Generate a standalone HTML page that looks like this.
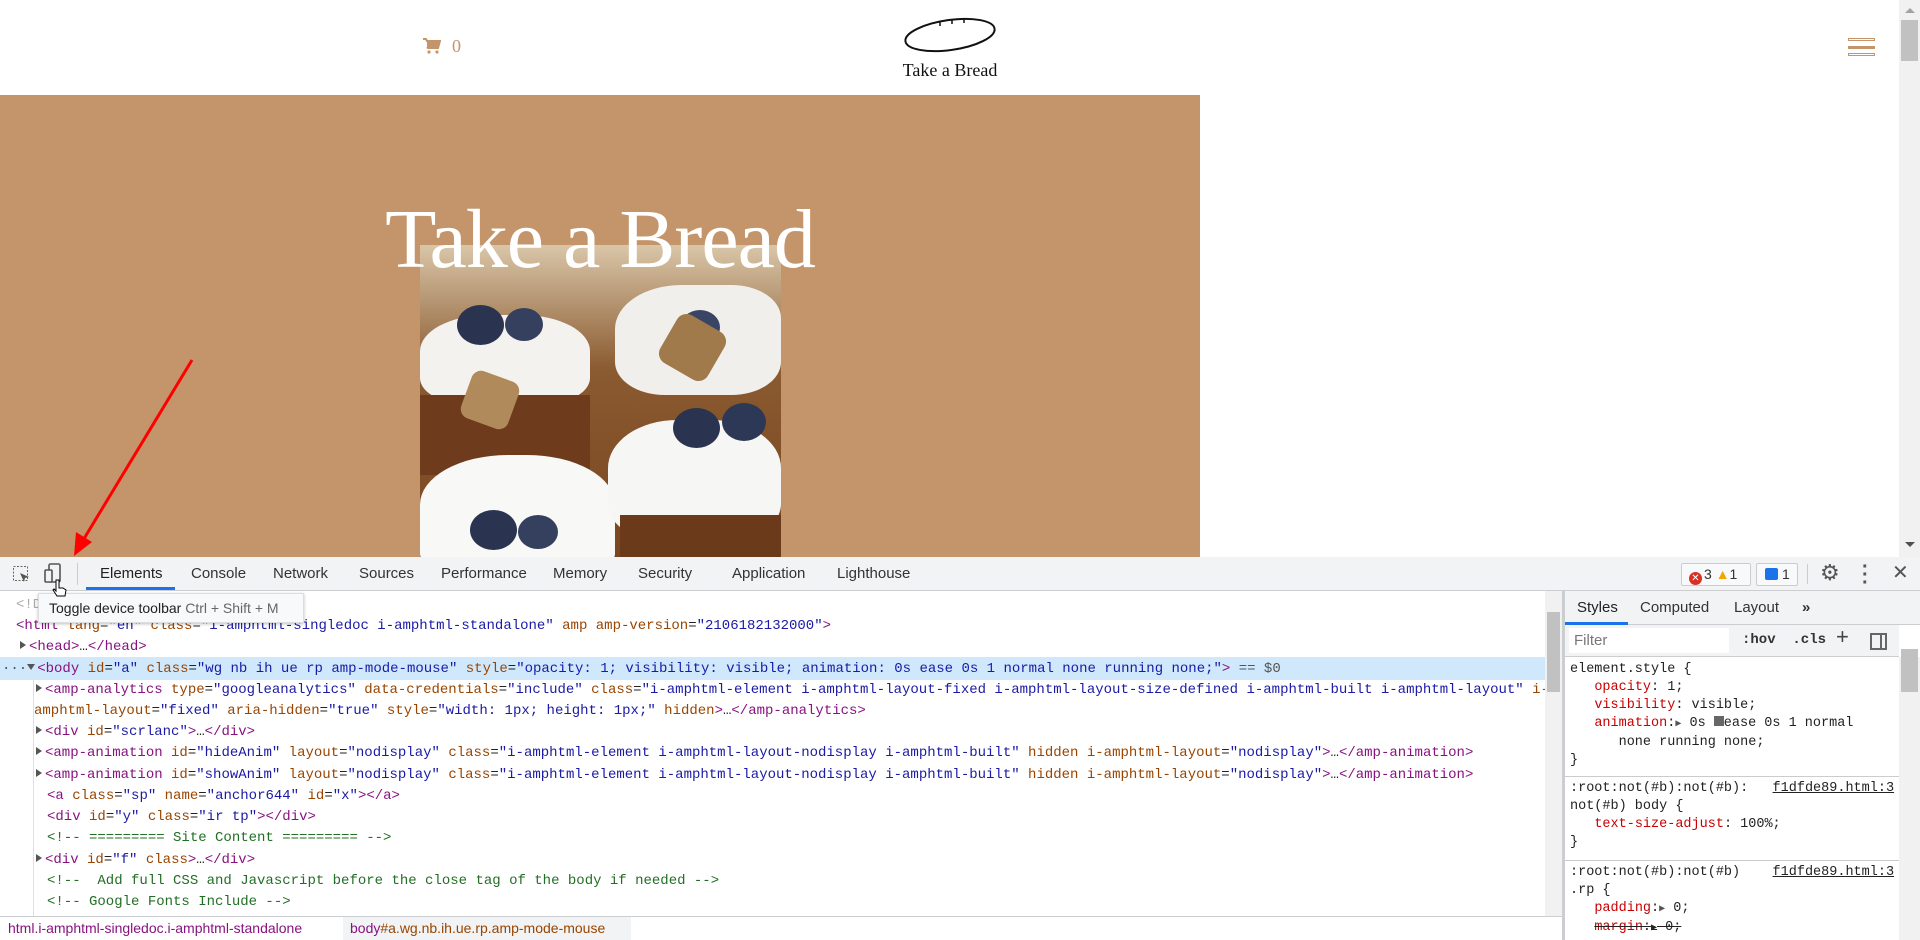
<!DOCTYPE html>
<html><head><meta charset="utf-8">
<style>
*{margin:0;padding:0;box-sizing:border-box}
body{width:1920px;height:940px;overflow:hidden;background:#fff;position:relative;font-family:"Liberation Sans",sans-serif}
.abs{position:absolute}
.code{font-family:"Liberation Mono",monospace;font-size:14px;white-space:pre;color:#222}
.t{color:#881280}.n{color:#994500}.v{color:#1a1aa6}.c{color:#236e25}.g{color:#555}
.tri{display:inline-block;width:0;height:0;border-left:6px solid #555;border-top:4px solid transparent;border-bottom:4px solid transparent;margin-right:3px;vertical-align:1px}
.trid{display:inline-block;width:0;height:0;border-top:6px solid #555;border-left:4px solid transparent;border-right:4px solid transparent;margin-right:2px;vertical-align:2px}
.line{position:absolute;left:0;height:21px;line-height:21px}
.tab{position:absolute;top:557px;height:34px;line-height:34px;font-size:15px;color:#333}
.st{font-family:"Liberation Mono",monospace;font-size:13.5px;white-space:pre;line-height:18px;position:absolute;left:1570px;color:#222}
.r{color:#c80000}
</style></head><body>
<svg class="abs" style="left:423px;top:38px" width="18" height="16" viewBox="0 0 18 16"><path d="M0 1h3l1 2h13l-2 7H5l-1-1" fill="none" stroke="#c4956a" stroke-width="2"/><rect x="4" y="3" width="12" height="6" fill="#c4956a"/><circle cx="6" cy="14" r="1.6" fill="#c4956a"/><circle cx="14" cy="14" r="1.6" fill="#c4956a"/></svg>
<div class="abs" style="left:452px;top:36px;font-family:'Liberation Serif',serif;font-size:18px;color:#c4956a">0</div>
<svg class="abs" style="left:900px;top:14px" width="100" height="42" viewBox="0 0 100 42"><ellipse cx="50" cy="21" rx="45" ry="15" transform="rotate(-8 50 21)" fill="none" stroke="#111" stroke-width="2"/><path d="M40 8v4M52 6v4M64 5v4" stroke="#111" stroke-width="1.5"/></svg>
<div class="abs" style="left:880px;top:60px;width:140px;text-align:center;font-family:'Liberation Serif',serif;font-size:18px;color:#111">Take a Bread</div>
<div class="abs" style="left:1848px;top:38px;width:27px;height:3px;border:1px solid #c4956a"></div>
<div class="abs" style="left:1848px;top:46px;width:27px;height:3px;background:#c4956a"></div>
<div class="abs" style="left:1848px;top:53px;width:27px;height:3px;border:1px solid #c4956a"></div>
<div class="abs" style="left:1899px;top:0;width:21px;height:557px;background:#f1f1f1"></div>
<div class="abs" style="left:1905px;top:8px;width:0;height:0;border-left:5px solid transparent;border-right:5px solid transparent;border-bottom:5px solid #a3a3a3"></div>
<div class="abs" style="left:1901px;top:20px;width:17px;height:41px;background:#c1c1c1"></div>
<div class="abs" style="left:1905px;top:542px;width:0;height:0;border-left:5px solid transparent;border-right:5px solid transparent;border-top:5px solid #505050"></div>
<div class="abs" style="left:0;top:95px;width:1200px;height:462px;background:#c4956a"></div>
<div class="abs" style="left:420px;top:245px;width:361px;height:312px;overflow:hidden;background:linear-gradient(180deg,#d9c6a8 0%,#8a5a30 40%,#7a4620 100%)">
 <div class="abs" style="left:0;top:70px;width:170px;height:90px;border-radius:40% 40% 30% 30%;background:#f4f2ee"></div>
 <div class="abs" style="left:0;top:150px;width:170px;height:80px;background:#6e3b1c"></div>
 <div class="abs" style="left:195px;top:40px;width:166px;height:110px;border-radius:40% 30% 30% 30%;background:#f1efec"></div>
 <div class="abs" style="left:0;top:210px;width:195px;height:110px;border-radius:45% 45% 10% 10%;background:#f8f8f7"></div>
 <div class="abs" style="left:188px;top:175px;width:173px;height:120px;border-radius:40% 40% 30% 30%;background:#f6f6f5"></div>
 <div class="abs" style="left:200px;top:270px;width:161px;height:50px;background:#6b3a1a"></div>
 <div class="abs" style="left:37px;top:60px;width:47px;height:40px;border-radius:50%;background:#2a3450"></div>
 <div class="abs" style="left:85px;top:63px;width:38px;height:33px;border-radius:50%;background:#34405e"></div>
 <div class="abs" style="left:50px;top:265px;width:47px;height:40px;border-radius:50%;background:#2a3450"></div>
 <div class="abs" style="left:98px;top:270px;width:40px;height:34px;border-radius:50%;background:#34405e"></div>
 <div class="abs" style="left:253px;top:163px;width:47px;height:40px;border-radius:50%;background:#2a3450"></div>
 <div class="abs" style="left:302px;top:158px;width:44px;height:38px;border-radius:50%;background:#2d3857"></div>
 <div class="abs" style="left:260px;top:65px;width:40px;height:35px;border-radius:50%;background:#3a4566"></div>
 <div class="abs" style="left:245px;top:75px;width:55px;height:55px;background:#a07a4a;transform:rotate(30deg);border-radius:20%"></div>
 <div class="abs" style="left:45px;top:130px;width:50px;height:50px;background:#b08a5a;transform:rotate(20deg);border-radius:20%"></div>
</div>
<div class="abs" style="left:200px;top:190px;width:800px;text-align:center;white-space:nowrap;font-family:'Liberation Serif',serif;font-size:84px;letter-spacing:-1px;color:#fff;line-height:100px">Take a Bread</div>
<svg class="abs" style="left:0;top:0" width="300" height="600"><line x1="192" y1="360" x2="82" y2="542" stroke="#f00" stroke-width="3"/><path d="M74 556 L76 532 L92 542 Z" fill="#f00"/></svg>
<div class="abs" style="left:0;top:557px;width:1920px;height:34px;background:#f1f3f4;border-bottom:1px solid #cbcdd1"></div>
<svg class="abs" style="left:12px;top:565px" width="20" height="20" viewBox="0 0 20 20"><rect x="1.5" y="1.5" width="14" height="14" fill="none" stroke="#666" stroke-dasharray="2 1.5"/><path d="M8 8l9 4-4 1-1 4z" fill="#555"/></svg>
<svg class="abs" style="left:44px;top:563px" width="20" height="24" viewBox="0 0 20 24"><rect x="5" y="1" width="11" height="18" rx="1.5" fill="none" stroke="#555" stroke-width="1.6"/><rect x="1" y="7" width="7" height="12" rx="1" fill="#f1f3f4" stroke="#555" stroke-width="1.6"/></svg>
<div class="abs" style="left:77px;top:563px;width:1px;height:22px;background:#ccc"></div>
<div class="tab" style="left:100px;color:#222">Elements</div>
<div class="abs" style="left:86px;top:587px;width:89px;height:3px;background:#1a73e8"></div>
<div class="tab" style="left:191px">Console</div>
<div class="tab" style="left:273px">Network</div>
<div class="tab" style="left:359px">Sources</div>
<div class="tab" style="left:441px">Performance</div>
<div class="tab" style="left:553px">Memory</div>
<div class="tab" style="left:638px">Security</div>
<div class="tab" style="left:732px">Application</div>
<div class="tab" style="left:837px">Lighthouse</div>
<div class="abs" style="left:1681px;top:563px;width:70px;height:23px;border:1px solid #ccc;border-radius:2px;background:#f8f9fa;font-size:14px;line-height:21px;color:#333"><span style="display:inline-block;width:13px;height:13px;border-radius:50%;background:#d93025;color:#fff;font-size:10px;line-height:13px;text-align:center;margin:0 2px 0 7px;vertical-align:-2px">✕</span>3 <span style="color:#f2a600">▲</span>1</div>
<div class="abs" style="left:1756px;top:563px;width:42px;height:23px;border:1px solid #ccc;border-radius:2px;background:#f8f9fa;font-size:14px;line-height:21px;color:#333"><span style="display:inline-block;width:13px;height:12px;background:#1a73e8;border-radius:2px;margin:0 4px 0 8px;vertical-align:-1px"></span>1</div>
<div class="abs" style="left:1807px;top:564px;width:1px;height:20px;background:#ccc"></div>
<div class="abs" style="left:1820px;top:560px;font-size:22px;color:#555">⚙</div>
<div class="abs" style="left:1862px;top:563px;font-size:20px;color:#555;line-height:8px;font-weight:bold">·<br>·<br>·</div>
<div class="abs" style="left:1892px;top:560px;font-size:20px;color:#555">✕</div>
<div class="abs" style="left:0;top:591px;width:1562px;height:326px;background:#fff"></div>
<div class="abs" style="left:0;top:657px;width:1545px;height:23px;background:#cfe8fc"></div>
<div class="abs" style="left:33px;top:680px;width:1px;height:237px;background:#dde"></div>
<div class="code" style="position:absolute;left:0;top:595px;width:1545px">
<div class="line" style="top:0;left:16px;color:#aaa">&lt;!DOCTYPE html&gt;</div>
<div class="line" style="top:21px;left:16px"><span class="t">&lt;html</span> <span class="n">lang</span>=<span class="v">"en"</span> <span class="n">class</span>=<span class="v">"i-amphtml-singledoc i-amphtml-standalone"</span> <span class="n">amp</span> <span class="n">amp-version</span>=<span class="v">"2106182132000"</span><span class="t">&gt;</span></div>
<div class="line" style="top:42px;left:20px"><span class="tri"></span><span class="t">&lt;head&gt;</span>…<span class="t">&lt;/head&gt;</span></div>
<div class="line" style="top:64px;left:2px"><span class="g">···</span><span class="trid"></span><span class="t">&lt;body</span> <span class="n">id</span>=<span class="v">"a"</span> <span class="n">class</span>=<span class="v">"wg nb ih ue rp amp-mode-mouse"</span> <span class="n">style</span>=<span class="v">"opacity: 1; visibility: visible; animation: 0s ease 0s 1 normal none running none;"</span><span class="t">&gt;</span> <span class="g">== $0</span></div>
<div class="line" style="top:85px;left:36px"><span class="tri"></span><span class="t">&lt;amp-analytics</span> <span class="n">type</span>=<span class="v">"googleanalytics"</span> <span class="n">data-credentials</span>=<span class="v">"include"</span> <span class="n">class</span>=<span class="v">"i-amphtml-element i-amphtml-layout-fixed i-amphtml-layout-size-defined i-amphtml-built i-amphtml-layout"</span> <span class="n">i-</span></div>
<div class="line" style="top:106px;left:34px"><span class="n">amphtml-layout</span>=<span class="v">"fixed"</span> <span class="n">aria-hidden</span>=<span class="v">"true"</span> <span class="n">style</span>=<span class="v">"width: 1px; height: 1px;"</span> <span class="n">hidden</span><span class="t">&gt;</span>…<span class="t">&lt;/amp-analytics&gt;</span></div>
<div class="line" style="top:127px;left:36px"><span class="tri"></span><span class="t">&lt;div</span> <span class="n">id</span>=<span class="v">"scrlanc"</span><span class="t">&gt;</span>…<span class="t">&lt;/div&gt;</span></div>
<div class="line" style="top:148px;left:36px"><span class="tri"></span><span class="t">&lt;amp-animation</span> <span class="n">id</span>=<span class="v">"hideAnim"</span> <span class="n">layout</span>=<span class="v">"nodisplay"</span> <span class="n">class</span>=<span class="v">"i-amphtml-element i-amphtml-layout-nodisplay i-amphtml-built"</span> <span class="n">hidden</span> <span class="n">i-amphtml-layout</span>=<span class="v">"nodisplay"</span><span class="t">&gt;</span>…<span class="t">&lt;/amp-animation&gt;</span></div>
<div class="line" style="top:170px;left:36px"><span class="tri"></span><span class="t">&lt;amp-animation</span> <span class="n">id</span>=<span class="v">"showAnim"</span> <span class="n">layout</span>=<span class="v">"nodisplay"</span> <span class="n">class</span>=<span class="v">"i-amphtml-element i-amphtml-layout-nodisplay i-amphtml-built"</span> <span class="n">hidden</span> <span class="n">i-amphtml-layout</span>=<span class="v">"nodisplay"</span><span class="t">&gt;</span>…<span class="t">&lt;/amp-animation&gt;</span></div>
<div class="line" style="top:191px;left:47px"><span class="t">&lt;a</span> <span class="n">class</span>=<span class="v">"sp"</span> <span class="n">name</span>=<span class="v">"anchor644"</span> <span class="n">id</span>=<span class="v">"x"</span><span class="t">&gt;&lt;/a&gt;</span></div>
<div class="line" style="top:212px;left:47px"><span class="t">&lt;div</span> <span class="n">id</span>=<span class="v">"y"</span> <span class="n">class</span>=<span class="v">"ir tp"</span><span class="t">&gt;&lt;/div&gt;</span></div>
<div class="line c" style="top:233px;left:47px">&lt;!-- ========= Site Content ========= --&gt;</div>
<div class="line" style="top:255px;left:36px"><span class="tri"></span><span class="t">&lt;div</span> <span class="n">id</span>=<span class="v">"f"</span> <span class="n">class</span><span class="t">&gt;</span>…<span class="t">&lt;/div&gt;</span></div>
<div class="line c" style="top:276px;left:47px">&lt;!--  Add full CSS and Javascript before the close tag of the body if needed --&gt;</div>
<div class="line c" style="top:297px;left:47px">&lt;!-- Google Fonts Include --&gt;</div>
</div>
<div class="abs" style="left:1545px;top:591px;width:17px;height:326px;background:#f1f1f1"></div>
<div class="abs" style="left:1547px;top:612px;width:13px;height:80px;background:#c1c1c1"></div>
<div class="abs" style="left:38px;top:593px;width:266px;height:30px;background:#f8f9fa;border:1px solid #ddd;box-shadow:0 1px 3px rgba(0,0,0,.25);font-size:14px;line-height:28px;padding-left:10px;color:#222">Toggle device toolbar <span style="color:#666">Ctrl + Shift + M</span></div>
<svg class="abs" style="left:52px;top:578px" width="16" height="22" viewBox="0 0 16 22"><path d="M4 2v11l-2-2-1 1 4 6h8l1-6-3-2H7V2z" fill="#fff" stroke="#000" stroke-width="1"/></svg>
<div class="abs" style="left:0;top:916px;width:1562px;height:24px;border-top:1px solid #cbcdd1;background:#fff"></div>
<div class="abs" style="left:343px;top:917px;width:288px;height:23px;background:#f1f3f4"></div>
<div class="abs" style="left:8px;top:917px;font-size:14px;line-height:23px;color:#881280">html.i-amphtml-singledoc.i-amphtml-standalone</div>
<div class="abs" style="left:350px;top:917px;font-size:14px;line-height:23px;color:#881280">body<span style="color:#994500">#a.wg.nb.ih.ue.rp.amp-mode-mouse</span></div>
<div class="abs" style="left:1562px;top:591px;width:3px;height:349px;background:#cbcdd1"></div>
<div class="abs" style="left:1565px;top:591px;width:355px;height:34px;background:#f1f3f4;border-bottom:1px solid #cbcdd1"></div>
<div class="tab" style="left:1577px;top:591px;color:#222">Styles</div>
<div class="abs" style="left:1565px;top:622px;width:63px;height:3px;background:#1a73e8"></div>
<div class="tab" style="left:1640px;top:591px">Computed</div>
<div class="tab" style="left:1734px;top:591px">Layout</div>
<div class="tab" style="left:1802px;top:591px;font-weight:bold">»</div>
<div class="abs" style="left:1565px;top:625px;width:334px;height:32px;background:#f1f3f4;border-bottom:1px solid #cbcdd1"></div>
<div class="abs" style="left:1569px;top:628px;width:160px;height:25px;background:#fff;font-size:15px;line-height:25px;padding-left:5px;color:#777">Filter</div>
<div class="abs" style="left:1742px;top:628px;font-family:'Liberation Mono',monospace;font-size:14px;font-weight:bold;line-height:25px;color:#333">:hov&nbsp;&nbsp;.cls</div>
<div class="abs" style="left:1836px;top:624px;font-size:22px;color:#444">+</div>
<div class="abs" style="left:1870px;top:633px;width:17px;height:17px;border:2px solid #666"><div style="position:absolute;left:8px;top:0;width:2px;height:13px;background:#666"></div></div>
<div class="st" style="top:661px">element.style {
   <span class="r">opacity</span>: 1;
   <span class="r">visibility</span>: visible;
   <span class="r">animation</span>:<span style="font-size:10px;color:#555">▶</span> 0s <span style="display:inline-block;width:10px;height:10px;background:#666"></span>ease 0s 1 normal
      none running none;
}</div>
<div class="abs" style="left:1565px;top:776px;width:334px;height:1px;background:#ccc"></div>
<div class="st" style="top:780px">:root:not(#b):not(#b):   <u>f1dfde89.html:3</u>
not(#b) body {
   <span class="r">text-size-adjust</span>: 100%;
}</div>
<div class="abs" style="left:1565px;top:860px;width:334px;height:1px;background:#ccc"></div>
<div class="st" style="top:864px">:root:not(#b):not(#b)    <u>f1dfde89.html:3</u>
.rp {
   <span class="r">padding</span>:<span style="font-size:10px;color:#555">▶</span> 0;
   <s><span class="r">margin</span>:<span style="font-size:10px">▶</span> 0;</s></div>
<div class="abs" style="left:1899px;top:657px;width:21px;height:283px;background:#f1f1f1"></div>
<div class="abs" style="left:1901px;top:649px;width:17px;height:43px;background:#c1c1c1"></div>
</body></html>
